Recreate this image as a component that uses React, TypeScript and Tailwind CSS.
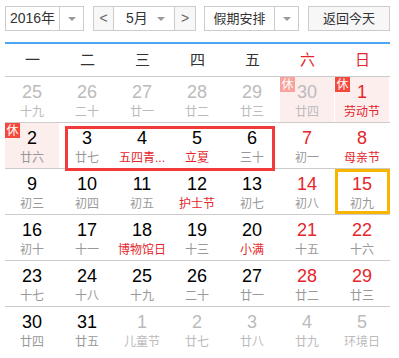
import React from "react";

type Day = {
  n: number;
  lunar: string;
  faded?: boolean;
  redNum?: boolean;
  redLunar?: boolean;
  rest?: boolean;
};

const weekdays = ["一", "二", "三", "四", "五", "六", "日"];

const rows: Day[][] = [
  [
    { n: 25, lunar: "十九", faded: true },
    { n: 26, lunar: "二十", faded: true },
    { n: 27, lunar: "廿一", faded: true },
    { n: 28, lunar: "廿二", faded: true },
    { n: 29, lunar: "廿三", faded: true },
    { n: 30, lunar: "廿四", faded: true, rest: true },
    { n: 1, lunar: "劳动节", redNum: true, redLunar: true, rest: true },
  ],
  [
    { n: 2, lunar: "廿六", rest: true },
    { n: 3, lunar: "廿七" },
    { n: 4, lunar: "五四青...", redLunar: true },
    { n: 5, lunar: "立夏", redLunar: true },
    { n: 6, lunar: "三十" },
    { n: 7, lunar: "初一", redNum: true },
    { n: 8, lunar: "母亲节", redNum: true, redLunar: true },
  ],
  [
    { n: 9, lunar: "初三" },
    { n: 10, lunar: "初四" },
    { n: 11, lunar: "初五" },
    { n: 12, lunar: "护士节", redLunar: true },
    { n: 13, lunar: "初七" },
    { n: 14, lunar: "初八", redNum: true },
    { n: 15, lunar: "初九", redNum: true },
  ],
  [
    { n: 16, lunar: "初十" },
    { n: 17, lunar: "十一" },
    { n: 18, lunar: "博物馆日", redLunar: true },
    { n: 19, lunar: "十三" },
    { n: 20, lunar: "小满", redLunar: true },
    { n: 21, lunar: "十五", redNum: true },
    { n: 22, lunar: "十六", redNum: true },
  ],
  [
    { n: 23, lunar: "十七" },
    { n: 24, lunar: "十八" },
    { n: 25, lunar: "十九" },
    { n: 26, lunar: "二十" },
    { n: 27, lunar: "廿一" },
    { n: 28, lunar: "廿二", redNum: true },
    { n: 29, lunar: "廿三", redNum: true },
  ],
  [
    { n: 30, lunar: "廿四" },
    { n: 31, lunar: "廿五" },
    { n: 1, lunar: "儿童节", faded: true },
    { n: 2, lunar: "廿七", faded: true },
    { n: 3, lunar: "廿八", faded: true },
    { n: 4, lunar: "廿九", faded: true },
    { n: 5, lunar: "环境日", faded: true },
  ],
];

function Caret() {
  return (
    <svg width="8" height="4" viewBox="0 0 8 4">
      <path d="M0 0h8L4 4z" fill="#999" />
    </svg>
  );
}

function Cell({ day }: { day: Day }) {
  const numColor = day.faded
    ? "text-[#bbbbbb]"
    : day.redNum
    ? "text-[#e4262c]"
    : "text-black";
  const lunarColor = day.faded
    ? "text-[#bbbbbb]"
    : day.redLunar
    ? "text-[#e4262c]"
    : "text-[#999999]";

  return (
    <div className="relative h-[45px] w-[55px]">
      <div
        className={`relative mr-px flex h-full flex-col items-center pt-[5px] ${
          day.rest ? "bg-[#fdeeee]" : ""
        }`}
      >
        {day.rest && (
          <span
            className={`absolute left-0 top-0 flex h-[15px] w-[15px] items-center justify-center text-[12px] leading-none text-white ${
              day.faded ? "bg-[#f8a29b]" : "bg-[#f5483d]"
            }`}
          >
            休
          </span>
        )}
        <span
          className={`font-['Liberation_Sans',sans-serif] text-[18px] leading-[20px] ${numColor}`}
        >
          {day.n}
        </span>
        <span className={`mt-[2px] whitespace-nowrap text-[12px] leading-[16px] ${lunarColor}`}>
          {day.lunar}
        </span>
      </div>
    </div>
  );
}

export default function App() {
  return (
    <div className="h-[358px] w-[399px] bg-white px-[5px] pt-[6px] font-['Liberation_Sans','Noto_Sans_CJK_SC',sans-serif] text-[#333333]">
      <div className="flex h-[25px] w-[385px] items-stretch text-[13px]">
        <div className="flex w-[79px] border border-[#cccccc] bg-white">
          <div className="flex w-[54px] items-center justify-center border-r border-[#cccccc] text-[14px]">
            2016年
          </div>
          <div className="flex flex-1 items-center justify-center">
            <Caret />
          </div>
        </div>

        <div className="ml-[9px] flex w-[103px] border border-[#cccccc]">
          <div className="flex w-[20px] items-center justify-center border-r border-[#cccccc] bg-[#f7f7f7] text-[14px] text-[#666666]">
            &lt;
          </div>
          <div className="flex w-[61px] items-center border-r border-[#cccccc] bg-white pl-[12px] pr-[9px]">
            <span className="text-[14px]">5月</span>
            <span className="ml-auto flex">
              <Caret />
            </span>
          </div>
          <div className="flex flex-1 items-center justify-center bg-[#f7f7f7] text-[14px] text-[#666666]">
            &gt;
          </div>
        </div>

        <div className="ml-[8px] flex w-[95px] border border-[#cccccc] bg-white">
          <div className="flex w-[70px] items-center justify-center border-r border-[#cccccc]">
            假期安排
          </div>
          <div className="flex flex-1 items-center justify-center">
            <Caret />
          </div>
        </div>

        <div className="ml-[9px] flex w-[82px] items-center justify-center border border-[#cccccc] bg-[#f7f7f7]">
          返回今天
        </div>
      </div>

      <div className="mt-[11px] h-[2px] w-[385px] bg-[#4da6f5]" />

      <div className="grid h-[33px] w-[385px] grid-cols-7 border-b border-[#cccccc] text-[15px]">
        {weekdays.map((w, i) => (
          <div
            key={w}
            className={`flex items-center justify-center ${
              i >= 5 ? "text-[#e4262c]" : "text-[#333333]"
            }`}
          >
            {w}
          </div>
        ))}
      </div>

      <div className="relative w-[385px]">
        {rows.map((row, r) => (
          <div
            key={r}
            className={`grid grid-cols-7 ${
              r < rows.length - 1 ? "border-b border-[#cccccc]" : ""
            }`}
          >
            {row.map((day, c) => (
              <Cell key={c} day={day} />
            ))}
          </div>
        ))}

        {/* selected range 3-6 */}
        <div className="pointer-events-none absolute left-[60px] top-[49px] h-[45px] w-[210px] border-[3px] border-[#f23a3a]" />
        {/* today */}
        <div className="pointer-events-none absolute left-[330px] top-[92px] h-[45px] w-[55px] border-[3px] border-[#f7b500]" />
      </div>
    </div>
  );
}
